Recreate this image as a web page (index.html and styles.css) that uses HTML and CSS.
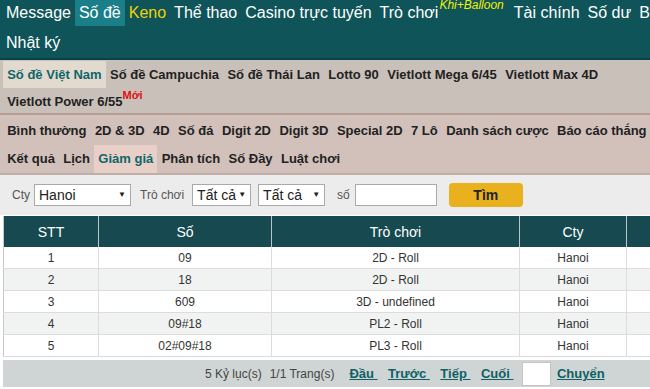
FILE: index.html
```html
<!DOCTYPE html>
<html lang="vi">
<head>
    <meta charset="UTF-8">
    <title>Số đề - Giảm giá</title>
    <link rel="stylesheet" href="styles.css">
</head>
<body>
<div class="page">
    <div class="topnav">
        <a>Message</a>
        <a class="on">Số đề</a>
        <a class="keno">Keno</a>
        <a>Thể thao</a>
        <a>Casino trực tuyến</a>
        <a>Trò chơi<sup>Khi+Balloon</sup></a>
        <a>Tài chính</a>
        <a>Số dư</a>
        <a>Báo cáo</a>
        <a>Nhật ký</a>
    </div>

    <div class="subnav">
        <a class="on">Số đề Việt Nam</a>
        <a>Số đề Campuchia</a>
        <a>Số đề Thái Lan</a>
        <a>Lotto 90</a>
        <a>Vietlott Mega 6/45</a>
        <a>Vietlott Max 4D</a>
        <a>Vietlott Power 6/55<sup>Mới</sup></a>
    </div>

    <div class="tabs">
        <a>Bình thường</a>
        <a>2D &amp; 3D</a>
        <a>4D</a>
        <a>Số đá</a>
        <a>Digit 2D</a>
        <a>Digit 3D</a>
        <a>Special 2D</a>
        <a>7 Lô</a>
        <a>Danh sách cược</a>
        <a>Báo cáo thắng thua</a>
        <a>Kết quả</a>
        <a>Lịch</a>
        <a class="on">Giảm giá</a>
        <a>Phân tích</a>
        <a>Số Đầy</a>
        <a>Luật chơi</a>
    </div>

    <div class="filter">
        <label>Cty</label>
        <span class="sel w-city"><select><option>Hanoi</option></select></span>
        <label class="ml">Trò chơi</label>
        <span class="sel w-game"><select><option>Tất cả</option></select></span>
        <span class="sel w-type"><select><option>Tất cả</option></select></span>
        <label class="ml2">số</label>
        <input type="text" class="num">
        <button class="find">Tìm</button>
    </div>

    <table class="grid">
        <thead>
            <tr>
                <th class="c1">STT</th>
                <th class="c2">Số</th>
                <th class="c3">Trò chơi</th>
                <th class="c4">Cty</th>
                <th class="c5">Giảm giá</th>
            </tr>
        </thead>
        <tbody>
            <tr><td>1</td><td>09</td><td>2D - Roll</td><td>Hanoi</td><td>0</td></tr>
            <tr><td>2</td><td>18</td><td>2D - Roll</td><td>Hanoi</td><td>0</td></tr>
            <tr><td>3</td><td>609</td><td>3D - undefined</td><td>Hanoi</td><td>0</td></tr>
            <tr><td>4</td><td>09#18</td><td>PL2 - Roll</td><td>Hanoi</td><td>0</td></tr>
            <tr><td>5</td><td>02#09#18</td><td>PL3 - Roll</td><td>Hanoi</td><td>0</td></tr>
        </tbody>
    </table>

    <div class="pager">
        <span>5 Kỷ lục(s)</span>
        <span class="pages">1/1 Trang(s)</span>
        <a>Đầu&nbsp;</a>
        <a>Trước&nbsp;</a>
        <a>Tiếp&nbsp;</a>
        <a class="last">Cuối&nbsp;</a>
        <input type="text" class="go">
        <a>Chuyển</a>
    </div>
</div>
</body>
</html>
```

FILE: styles.css
```css
html, body {
    margin: 0;
    padding: 0;
    overflow: hidden;
    background: #fff;
}
.page {
    width: 716px;
    font-family: "Liberation Sans", Arial, sans-serif;
    color: #222;
}
a {
    cursor: pointer;
}

/* top menu */
.topnav {
    background: #0e5459;
    border-bottom: 2px solid #0a4347;
    padding: 0 2px 2px 2px;
    display: flex;
    flex-wrap: wrap;
    row-gap: 4px;
    font-size: 16px;
    line-height: 26px;
}
.topnav a {
    color: #fff;
    padding: 0 4px;
    white-space: nowrap;
}
.topnav a.on {
    background: #1a7f89;
}
.topnav a.keno {
    color: #f2d200;
}
.topnav sup {
    color: #f4f000;
    font-style: italic;
    font-size: 12px;
    line-height: 0;
    vertical-align: 9px;
    margin: 0 2px 0 1px;
}

/* second menu */
.subnav {
    background: #c9c1b9;
    border-bottom: 2px solid #b69d93;
    padding: 1px 0 0 3px;
    display: flex;
    flex-wrap: wrap;
    font-size: 13px;
    font-weight: bold;
    line-height: 27px;
    height: 52px;
    overflow: hidden;
}
.subnav a {
    padding: 0 4.2px;
    white-space: nowrap;
}
.subnav a.on {
    background: #e2dacf;
    color: #0f6669;
}
.subnav sup {
    color: #e01010;
    font-size: 11px;
    line-height: 0;
    vertical-align: 7px;
}

/* tabs */
.tabs {
    background: #d1c1ba;
    border-bottom: 2px solid #c1aea6;
    padding: 2px 0 0 3px;
    display: flex;
    flex-wrap: wrap;
    font-size: 13px;
    font-weight: bold;
    line-height: 27px;
    height: 56px;
}
.tabs a {
    padding: 0 4.2px;
    white-space: nowrap;
}
.tabs a.on {
    background: #e8d0c8;
    color: #0f6669;
}

/* filter */
.filter {
    background: #ececec;
    height: 40px;
    display: flex;
    align-items: center;
    padding-left: 12px;
    font-size: 12px;
    color: #555;
}
.filter label {
    margin-right: 4px;
}
.filter .ml {
    margin-left: 4px;
    margin-right: 8px;
}
.filter .ml2 {
    margin-left: 7px;
}
.sel {
    position: relative;
    display: inline-block;
    margin-right: 5px;
}
.sel select {
    appearance: none;
    -webkit-appearance: none;
    width: 100%;
    height: 22px;
    border: 1px solid #a9a9a9;
    background: #fff;
    font-family: "Liberation Sans", Arial, sans-serif;
    font-size: 14px;
    color: #222;
    padding: 0 0 0 4px;
    border-radius: 0;
}
.sel::after {
    content: "\25BC";
    position: absolute;
    right: 5px;
    top: 6px;
    font-size: 8px;
    color: #222;
    pointer-events: none;
}
.w-city { width: 97px; }
.w-game { width: 59px; margin-right: 7px; }
.w-type { width: 67px; }
.num {
    width: 76px;
    height: 18px;
    border: 1px solid #a9a9a9;
    margin-left: 1px;
    padding: 1px 2px;
}
.find {
    margin-left: 12px;
    width: 74px;
    height: 24px;
    background: #e9b11e;
    border: none;
    border-radius: 4px;
    font-family: "Liberation Sans", Arial, sans-serif;
    font-size: 14px;
    font-weight: bold;
    color: #222;
}

/* table */
.grid {
    margin: 1px 0 0 3px;
    border-collapse: collapse;
    table-layout: fixed;
    width: 748px;
    border-left: 1px solid #c8c8c8;
    font-size: 12px;
    color: #333;
}
.grid th {
    background: #164a50;
    color: #fff;
    font-weight: normal;
    font-size: 14px;
    height: 31px;
    padding: 0;
    border-right: 1px solid #b9c7c8;
}
.grid td {
    text-align: center;
    height: 21px;
    padding: 0;
    border-right: 1px solid #dcdcdc;
    border-bottom: 1px solid #dcdcdc;
}
.grid tbody tr:nth-child(even) td {
    background: #f1f3f3;
}
.c1 { width: 94px; }
.c2 { width: 172px; }
.c3 { width: 247px; }
.c4 { width: 106px; }
.c5 { width: 129px; }

/* pager */
.pager {
    margin: 3px 0 0 3px;
    background: #cfd4d4;
    height: 27px;
    display: flex;
    align-items: center;
    padding-left: 202px;
    font-size: 12px;
    color: #444;
}
.pager span {
    margin-right: 8px;
}
.pager .pages {
    margin-right: 15px;
}
.pager a {
    color: #0e6064;
    font-weight: bold;
    font-size: 13px;
    text-decoration: underline;
    margin-right: 10.5px;
}
.pager a.last {
    margin-right: 8.5px;
}
.pager .go {
    width: 25px;
    height: 20px;
    border: 1px solid #c4c4c4;
    padding: 1px;
    margin: 0 6px 0 0;
}
```
